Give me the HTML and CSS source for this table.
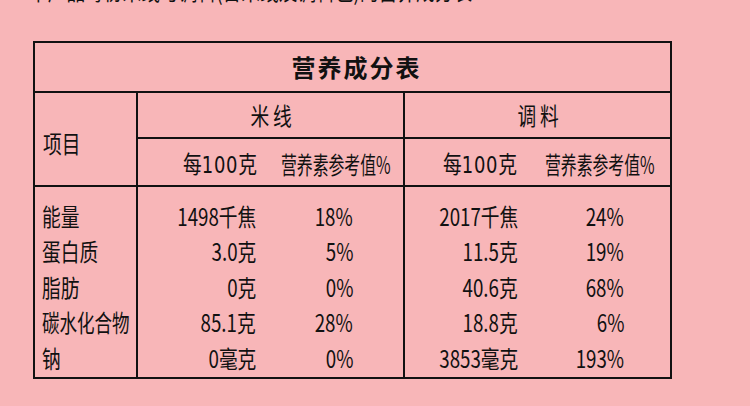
FILE: index.html
```html
<!DOCTYPE html>
<html lang="zh-CN">
<head>
<meta charset="utf-8">
<title>营养成分表</title>
<link rel="stylesheet" href="styles.css">
</head>
<body>
<div class="page">
  <div class="cut"><span class="t">本产品每份米线与调料(含米线及调料包)的营养成分表</span></div>
  <div class="nt">
    <div class="c title"><span class="tb">营养成分表</span></div>
    <div class="c item"><span class="t">项目</span></div>
    <div class="c grp"><span class="t tc sp">米线</span></div>
    <div class="c grp"><span class="t tc sp">调料</span></div>
    <div class="c sub sub-a">
      <span class="t">每<span class="num">100</span>克</span>
      <span class="t tn">营养素参考值%</span>
    </div>
    <div class="c sub sub-b">
      <span class="t">每<span class="num">100</span>克</span>
      <span class="t tn">营养素参考值%</span>
    </div>
    <div class="c labels">
      <span class="t">能量</span>
      <span class="t">蛋白质</span>
      <span class="t">脂肪</span>
      <span class="t tl">碳水化合物</span>
      <span class="t">钠</span>
    </div>
    <div class="c vals vals-a">
      <span class="t tr">1498千焦</span><span class="t tr">18%</span>
      <span class="t tr">3.0克</span><span class="t tr">5%</span>
      <span class="t tr">0克</span><span class="t tr">0%</span>
      <span class="t tr">85.1克</span><span class="t tr">28%</span>
      <span class="t tr">0毫克</span><span class="t tr">0%</span>
    </div>
    <div class="c vals vals-b">
      <span class="t tr">2017千焦</span><span class="t tr">24%</span>
      <span class="t tr">11.5克</span><span class="t tr">19%</span>
      <span class="t tr">40.6克</span><span class="t tr">68%</span>
      <span class="t tr">18.8克</span><span class="t tr">6%</span>
      <span class="t tr">3853毫克</span><span class="t tr">193%</span>
    </div>
  </div>
</div>
</body>
</html>
```
FILE: styles.css
```css
html, body {
  margin: 0;
  padding: 0;
}
body {
  width: 750px;
  height: 406px;
  overflow: hidden;
  background: #f8b6b8;
  color: #111;
  font-family: "Noto Sans CJK SC", "Noto Sans", sans-serif;
}
.page {
  padding-left: 33px;
}
.cut {
  margin-top: -22px;
  margin-left: -4px;
  height: 24px;
  line-height: 24px;
  font-size: 24px;
}
.t {
  display: inline-block;
  font-size: 24px;
  line-height: 1;
  white-space: nowrap;
  transform: scaleX(0.78);
  transform-origin: left center;
}
.tc {
  transform-origin: center center;
}
.tr {
  transform-origin: right center;
}
.tn {
  transform: scaleX(0.66);
}
.tl {
  transform: scaleX(0.73);
}
.num {
  font-family: "DejaVu Sans", "Noto Sans", sans-serif;
  font-size: 23px;
  letter-spacing: 1px;
}
.tb {
  font-size: 24px;
  font-weight: bold;
  letter-spacing: 2px;
  line-height: 1;
}
.sp {
  letter-spacing: 5px;
  margin-right: -5px;
}
.nt {
  margin-top: 39px;
  display: grid;
  box-sizing: border-box;
  width: 639px;
  border: 2px solid #111;
  background: #111;
  gap: 2px;
  grid-template-columns: 101px 265px 265px;
  grid-template-rows: 48px 44px 46px 190px;
}
.c {
  background: #f8b6b8;
}
.title {
  grid-column: 1 / 4;
  display: flex;
  align-items: center;
  justify-content: center;
  padding-left: 8px;
}
.item {
  grid-row: 2 / 4;
  display: flex;
  align-items: center;
  padding-left: 8px;
  padding-top: 8px;
}
.grp {
  display: flex;
  align-items: center;
  justify-content: center;
}
.sub {
  display: grid;
  align-items: center;
  padding-top: 3px;
}
.sub-a {
  padding-left: 45px;
  grid-template-columns: 98px 1fr;
}
.sub-b {
  padding-left: 38px;
  grid-template-columns: 102px 1fr;
}
.labels {
  display: grid;
  grid-auto-rows: 35.5px;
  align-items: center;
  padding-top: 11px;
  padding-left: 7px;
}
.vals {
  display: grid;
  grid-auto-rows: 35.5px;
  align-items: center;
  padding-top: 11px;
}
.vals > .t {
  justify-self: end;
}
.vals-a {
  grid-template-columns: 118px 97px;
}
.vals-b {
  grid-template-columns: 113px 106px;
}
```
